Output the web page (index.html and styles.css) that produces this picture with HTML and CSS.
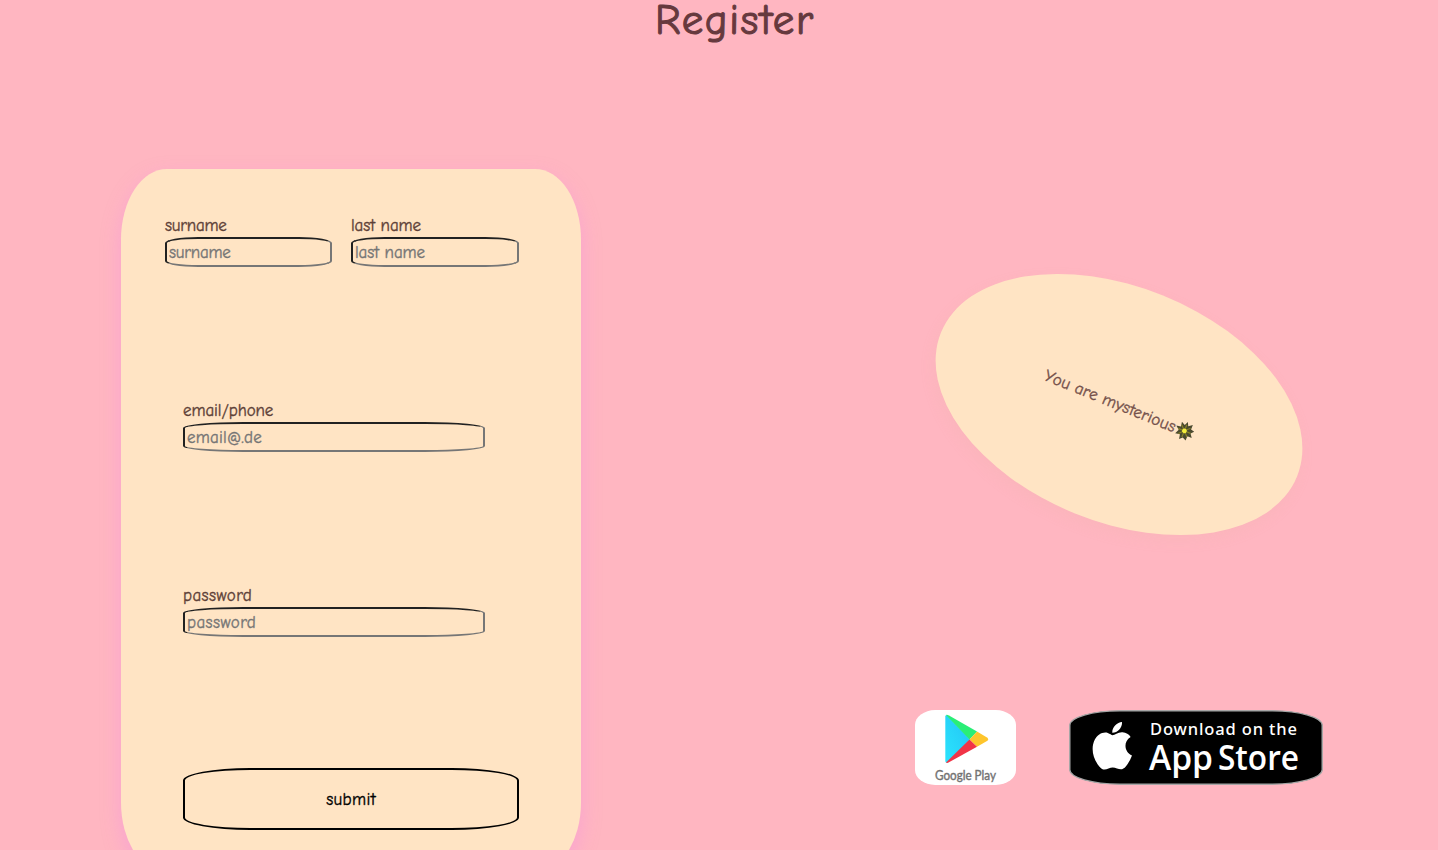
FILE: index.html
```html
<!DOCTYPE html>
<html lang="en">
<head>
<meta charset="utf-8">
<title>Register</title>
<link rel="stylesheet" href="styles.css">
</head>
<body>
<h1 class="title">Register</h1>
<main class="content">
  <form class="card">
    <div class="names">
      <label class="field first"><span class="label surname">surname</span><input class="input surname" type="text" placeholder="surname"></label>
      <label class="field"><span class="label last">last name</span><input class="input last" type="text" placeholder="last name"></label>
    </div>
    <label class="field wide"><span class="label email">email/phone</span><input class="input mail" type="text" placeholder="email@.de"></label>
    <label class="field wide"><span class="label pass">password</span><input class="input pass" type="password" placeholder="password"></label>
    <button class="submit" type="button">submit</button>
  </form>
  <aside class="side">
    <div class="bubble"><span class="message">You are mysterious</span><svg class="flower" viewBox="0 0 20 20"><path d="M10 0l2 4 4-3 0 5 4 1-3 3 3 4-5 0 0 5-4-2-3 3-1-5-5 1 2-5-4-3 5-1-1-5 4 2z" fill="#4b4a30"/><path d="M10 3v14M3 10h14M5 5l10 10M15 5L5 15" stroke="#857f28" stroke-width="1.300"/><circle cx="10" cy="10" r="2.500" fill="#f4ee3c"/></svg></div>
    <div class="stores">
      <svg class="store play" viewBox="0 0 101 75" role="img" aria-label="Google Play">
        <defs><linearGradient id="blue" x1="1" y1="0" x2="0" y2="1"><stop offset="0" stop-color="#23c4f5"/><stop offset="1" stop-color="#2be4fd"/></linearGradient></defs>
        <rect width="101" height="75" fill="#fff"/>
        <path d="M30.300 6.500Q30.300 4.800 32 5.300L55 29.500 33 52.500Q30.300 53.500 30.300 51z" fill="url(#blue)"/>
        <path d="M31 5Q32 4.500 34 5.500L62 21.500 54.500 29.500z" fill="#2aee76"/>
        <path d="M62 21.500L72 27.500Q74.500 29.400 72 31L62 36.800 54.500 29.500z" fill="#fec52c"/>
        <path d="M54.500 29.500L62 36.800 34 52.300Q32 53.300 31 52.600z" fill="#f13447"/>
        <text class="play-text" x="20" y="70" textLength="61" lengthAdjust="spacingAndGlyphs">Google Play</text>
      </svg>
      <svg class="store apple" viewBox="0 0 254 75" role="img" aria-label="Download on the App Store">
        <rect x="0.750" y="0.750" width="252.500" height="73.500" rx="50" ry="14.500" fill="#000" stroke="#a6a6a6" stroke-width="1.500"/>
        <path d="M53 12C53.500 17.500 48.500 23 43.300 22.800 42.800 17.500 48 12.300 53 12zM43.500 25.200C46 25.200 49 22 53.500 22.300 57 22.500 60 24.200 61.600 27 54 31.500 55.200 42 63 45.500 61.500 49.500 59.500 53 57 56.300 54 60 51.500 59.800 48 58.500 45 57.200 42.500 57.200 39.500 58.500 36 60 33.500 60.200 30.500 56.700 24 49 21.500 38.500 25.700 29.800 28.500 24.300 34 21.500 38.800 22.900 41 23.600 42.500 25 43.500 25.200z" fill="#fff"/>
        <text class="store-small" x="81" y="25" textLength="147" lengthAdjust="spacing">Download on the</text>
        <text class="store-big" x="80" y="59.500" textLength="64" lengthAdjust="spacingAndGlyphs">App</text>
        <text class="store-big" x="149" y="59.500" textLength="81" lengthAdjust="spacingAndGlyphs">Store</text>
      </svg>
    </div>
  </aside>
</main>
</body>
</html>
```
FILE: styles.css
```css
* { box-sizing: border-box; }
html { overflow: hidden; }
body { margin: 0; height: 850px; overflow: hidden; background: #ffb6c1; font-family: "Comic Sans MS", "Comic Neue", "Comic Relief", cursive, sans-serif; font-size: 17px; color: #5d4037; -webkit-text-stroke: .35px; }
.title { margin: 0; padding-left: 655px; height: 169px; font-size: 43px; font-weight: 400; line-height: 40px; letter-spacing: 1.6px; color: #66393e; -webkit-text-stroke: 1.1px; }
.content { display: flex; padding-left: 121px; }
.card { flex: none; width: 460px; height: 704px; padding: 45px 44px 0; border-radius: 10%; background: #ffe4c4; box-shadow: 0 8px 20px rgba(238, 130, 238, .35); }
.names { display: flex; gap: 19px; height: 185px; }
.field { display: block; width: 168px; }
.first { width: 167px; }
.wide { width: 302px; height: 185px; margin-left: 18px; }
.label { display: block; height: 23px; line-height: 24px; white-space: nowrap; }
.input { display: block; width: 100%; height: 30px; padding: 1px 2px; border: 2px inset #767676; border-radius: 20%; background: transparent; font: inherit; }
.input::placeholder { color: #757575; }
.surname { letter-spacing: -.25px; }
.last, .email { letter-spacing: -.1px; }
.mail { letter-spacing: .2px; }
.pass { letter-spacing: .4px; }
.submit { display: block; width: 336px; height: 62px; margin: -1px 0 0 18px; border: 2px solid #000; border-radius: 20%; background: transparent; color: #000; font: inherit; letter-spacing: .35px; }
.side { flex: none; padding: 118px 0 0 334px; }
.bubble { display: flex; align-items: center; justify-content: center; width: 384px; height: 235px; margin-left: 12px; border-radius: 50%; background: #ffe4c4; transform: rotate(22deg); box-shadow: 0 6px 14px rgba(225, 175, 155, .13); color: #74504a; white-space: nowrap; }
.message { letter-spacing: .1px; }
.flower { width: 19px; height: 19px; }
.stores { display: flex; gap: 53px; margin-top: 188px; -webkit-text-stroke: 0; }
.store { display: block; height: 75px; border-radius: 20%; }
.play { width: 101px; }
.apple { width: 254px; }
.play-text { font: 12.500px Lato, sans-serif; fill: #737373; stroke: #737373; stroke-width: .4px; }
.store-small { font: 500 16.500px "Noto Sans", sans-serif; fill: #fff; }
.store-big { font: 600 35px "Open Sans", sans-serif; fill: #fff; }
```
